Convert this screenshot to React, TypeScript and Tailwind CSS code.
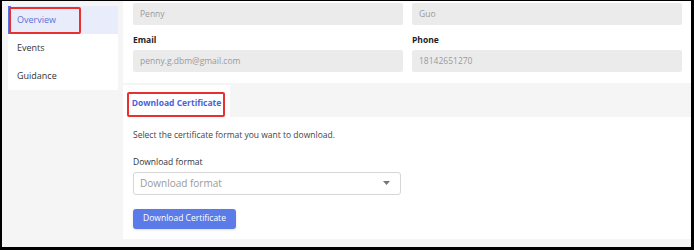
import React from 'react';

const font = {fontFamily: '"Open Sans", "Liberation Sans", Arial, sans-serif'};

function SideNav() {
  const items = ['Overview', 'Events', 'Guidance'];
  return (
    <div className="mt-[5px] ml-[6px] w-[110px] self-start bg-white">
      {items.map((item, i) => (
        <div
          key={item}
          className={
            i === 0
              ? 'relative flex h-[28px] items-center border-l-[3px] border-[#5a72e8] bg-[#e9ecfb] pl-[6px] text-[9px] text-[#5b6fd8]'
              : 'flex h-[28px] items-center pl-[9px] text-[9px] text-[#333]'
          }
        >
          {item}
          {i === 0 && (
            <div className="absolute left-[-2px] top-[1px] h-[27px] w-[72px] rounded-[2px] border-2 border-[#e8302f]" />
          )}
        </div>
      ))}
    </div>
  );
}

function Field({value}: {value: string}) {
  return (
    <div className="flex h-[22px] items-center rounded-[2px] bg-[#ebebeb] px-[7px] text-[8.5px] text-[#9a9a9a]">
      {value}
    </div>
  );
}

export default function App() {
  return (
    <div
      style={font}
      className="flex h-[250px] w-[694px] overflow-hidden border-t border-l-2 border-r-[3px] border-b-[3px] border-black bg-[#f5f5f5]"
    >
      <SideNav />
      <div className="ml-[5px] flex flex-1 flex-col">
        <div className="bg-white pt-[2px] pb-[11px] pl-[10px] pr-[9px]">
          <div className="grid grid-cols-2 gap-x-[9px]">
            <Field value="Penny" />
            <Field value="Guo" />
            <div className="flex h-[25px] items-end pb-[3px] text-[8.5px] font-bold text-[#222]">Email</div>
            <div className="flex h-[25px] items-end pb-[3px] text-[8.5px] font-bold text-[#222]">Phone</div>
            <Field value="penny.g.dbm@gmail.com" />
            <Field value="18142651270" />
          </div>
        </div>
        <div className="mt-[2px] flex h-[32px]">
          <div className="relative flex w-[107px] items-center justify-center bg-white pt-[4px] text-[8.5px] font-bold text-[#4a63d8]">
            Download Certificate
            <div className="absolute left-[4px] top-[7px] h-[25px] w-[98px] rounded-[2px] border-2 border-[#e8302f]" />
          </div>
        </div>
        <div className="h-[122px] bg-white px-[10px] pt-[12px]">
          <div className="text-[8.5px] text-[#444]">Select the certificate format you want to download.</div>
          <div className="mt-[14px] text-[8.5px] text-[#333]">Download format</div>
          <div className="mt-[3px] flex h-[23px] w-[268px] items-center justify-between rounded-[3px] border border-[#d6d6d6] pl-[6px] pr-[10px] text-[10px] text-[#9a9a9a]">
            <span>Download format</span>
            <svg width="7" height="4" viewBox="0 0 7 4">
              <path d="M0 0h7L3.5 4z" fill="#777" />
            </svg>
          </div>
          <button className="mt-[14px] flex h-[20px] w-[103px] items-center justify-center rounded-[3px] bg-[#5b7be9] text-[8.5px] font-medium text-white shadow-sm">
            Download Certificate
          </button>
        </div>
      </div>
    </div>
  );
}
